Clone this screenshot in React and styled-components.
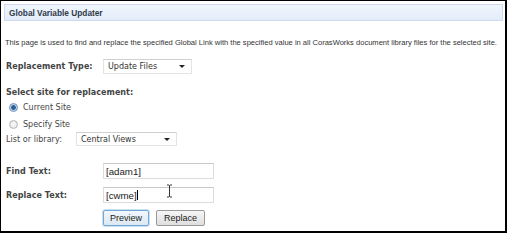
import React from "react";
import styled, { createGlobalStyle } from "styled-components";

const GlobalStyle = createGlobalStyle`
	body {
		margin: 0;
		background: #ffffff;
	}
`;

const Frame = styled.div`
	position: relative;
	box-sizing: border-box;
	width: 507px;
	height: 233px;
	border-top: 1px solid #000;
	border-left: 1px solid #000;
	border-right: 2px solid #000;
	border-bottom: 2px solid #000;
	padding: 3px 2px 0 3px;
	background: #fff;
	font-family: "DejaVu Sans", Verdana, sans-serif;
	color: #3b3b3b;
	overflow: hidden;
`;

const TitleBar = styled.div`
	box-sizing: border-box;
	height: 17px;
	display: flex;
	align-items: center;
	padding-left: 4px;
	border: 1px solid #cfdbec;
	background: linear-gradient(to bottom, #f1f6fd 0%, #e2ecfa 100%);
	font-family: "Liberation Sans", Arial, sans-serif;
	font-weight: bold;
	font-size: 8.3px;
	color: #2f3a4a;
`;

const Description = styled.p`
	margin: 17px 0 0 1px;
	line-height: 10px;
	font-family: "Liberation Sans", Arial, sans-serif;
	font-size: 7.55px;
	color: #333;
	white-space: nowrap;
`;

const Row = styled.div`
	display: flex;
	align-items: center;
	margin-top: ${(p) => p.$top}px;
	padding-left: 2px;
`;

const Label = styled.span`
	width: ${(p) => p.$width}px;
	flex-shrink: 0;
	font-size: 8px;
	font-weight: ${(p) => (p.$bold ? "bold" : "normal")};
	color: #444;
	letter-spacing: 0.05px;
`;

const Heading = styled.div`
	margin: 13px 0 0 2px;
	line-height: 12px;
	font-size: 8px;
	font-weight: bold;
	color: #444;
	letter-spacing: 0.05px;
`;

const Select = styled.div`
	box-sizing: border-box;
	width: ${(p) => p.$width}px;
	height: ${(p) => p.$height}px;
	display: flex;
	align-items: center;
	justify-content: space-between;
	padding: 0 6px 0 4px;
	border: 1px solid #e4e4e4;
	border-top-color: #d0d0d0;
	background: #fff;
	font-size: 8px;
	color: #333;
`;

const Arrow = styled.span`
	width: 0;
	height: 0;
	border-left: 3px solid transparent;
	border-right: 3px solid transparent;
	border-top: 3px solid #222;
`;

const RadioRow = styled.label`
	display: flex;
	align-items: center;
	gap: 5px;
	height: 14px;
	margin-top: ${(p) => p.$top}px;
	padding-left: 5px;
	font-size: 8px;
	color: #444;
`;

const RadioDot = styled.span`
	box-sizing: border-box;
	width: 9px;
	height: 9px;
	border-radius: 50%;
	border: 1px solid ${(p) => (p.$checked ? "#6f8fb5" : "#b9b9b9")};
	background: ${(p) =>
		p.$checked
			? "radial-gradient(circle, #2d5f95 0 2px, #9fc0e4 2.5px, #e8f0fa 4px)"
			: "radial-gradient(circle, #f4f4f4 0 2px, #dadada 4px)"};
`;

const TextBox = styled.div`
	box-sizing: border-box;
	width: 111px;
	height: 16px;
	display: flex;
	align-items: center;
	padding-left: 2px;
	border: 1px solid #dcdcdc;
	border-top-color: #c8c8c8;
	font-family: "Liberation Sans", Arial, sans-serif;
	font-size: 9.7px;
	color: #222;
`;

const Caret = styled.span`
	display: inline-block;
	width: 1px;
	height: 10px;
	margin-left: 0.5px;
	background: #000;
`;

const ButtonRow = styled.div`
	display: flex;
	gap: 7px;
	margin: 7px 0 0 99px;
`;

const Button = styled.button`
	box-sizing: border-box;
	height: 16px;
	width: ${(p) => p.$width}px;
	padding: 0;
	border: 1px solid ${(p) => (p.$focused ? "#73a6d4" : "#9a9a9a")};
	border-radius: 2px;
	background: ${(p) =>
		p.$focused
			? "linear-gradient(to bottom, #f2f7fc 0%, #dde8f2 100%)"
			: "linear-gradient(to bottom, #f6f6f6 0%, #dedede 100%)"};
	box-shadow: ${(p) => (p.$focused ? "0 0 0 1px #c7e1f5" : "none")};
	font-family: "Liberation Sans", Arial, sans-serif;
	font-size: 9px;
	color: #222;
`;

const IBeam = styled.svg`
	position: absolute;
	left: 165px;
	top: 183px;
`;

export default function App() {
	return (
		<>
			<GlobalStyle />
			<Frame>
				<TitleBar>Global Variable Updater</TitleBar>
				<Description>
					This page is used to find and replace the specified Global Link with the
					specified value in all CorasWorks document library files for the selected
					site.
				</Description>
				<Row $top={11}>
					<Label $bold $width={97}>Replacement Type:</Label>
					<Select $width={89} $height={15}>
						Update Files
						<Arrow />
					</Select>
				</Row>
				<Heading>Select site for replacement:</Heading>
				<RadioRow $top={1}>
					<RadioDot $checked />
					Current Site
				</RadioRow>
				<RadioRow $top={3}>
					<RadioDot />
					Specify Site
				</RadioRow>
				<Row $top={1}>
					<Label $width={70}>List or library:</Label>
					<Select $width={101} $height={14}>
						Central Views
						<Arrow />
					</Select>
				</Row>
				<Row $top={17}>
					<Label $bold $width={97}>Find Text:</Label>
					<TextBox>[adam1]</TextBox>
				</Row>
				<Row $top={8}>
					<Label $bold $width={97}>Replace Text:</Label>
					<TextBox>
						[cwme]
						<Caret />
					</TextBox>
				</Row>
				<ButtonRow>
					<Button $focused $width={46}>Preview</Button>
					<Button $width={49}>Replace</Button>
				</ButtonRow>
				<IBeam width="7" height="14" viewBox="0 0 7 14">
					<path
						d="M1 1h2l0.5 0.5L4 1h2M3.5 1.5v11M1 13h2l0.5-0.5L4 13h2"
						fill="none"
						stroke="#333"
						strokeWidth="1"
					/>
				</IBeam>
			</Frame>
		</>
	);
}
